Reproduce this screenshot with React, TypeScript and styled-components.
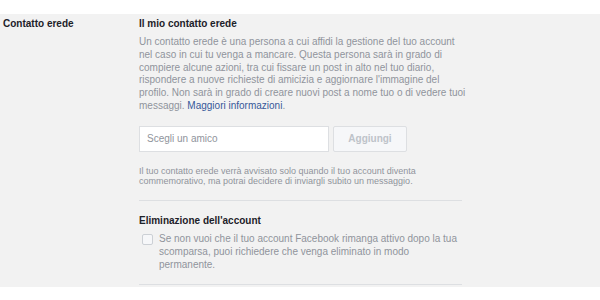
import React from 'react';
import styled, { createGlobalStyle } from 'styled-components';

const GlobalStyle = createGlobalStyle`
    body {
        margin: 0;
        background: #ffffff;
        font-family: "Liberation Sans", Arial, sans-serif;
    }
`;

export default function App() {
    return (
        <Root>
            <GlobalStyle/>
            <Panel>
                <Label>Contatto erede</Label>
                <Content>
                    <Heading>Il mio contatto erede</Heading>
                    <Paragraph>
                        Un contatto erede è una persona a cui affidi la gestione del tuo account
                        nel caso in cui tu venga a mancare. Questa persona sarà in grado di
                        compiere alcune azioni, tra cui fissare un post in alto nel tuo diario,
                        rispondere a nuove richieste di amicizia e aggiornare l'immagine del
                        profilo. Non sarà in grado di creare nuovi post a nome tuo o di vedere tuoi
                        messaggi. <Link href="#">Maggiori informazioni</Link>.
                    </Paragraph>
                    <FormRow>
                        <FriendInput placeholder="Scegli un amico"/>
                        <AddButton disabled>Aggiungi</AddButton>
                    </FormRow>
                    <Note>
                        Il tuo contatto erede verrà avvisato solo quando il tuo account diventa
                        commemorativo, ma potrai decidere di inviargli subito un messaggio.
                    </Note>
                    <Divider/>
                    <Heading $gap={13}>Eliminazione dell'account</Heading>
                    <CheckRow>
                        <Box type="checkbox"/>
                        <CheckText>
                            Se non vuoi che il tuo account Facebook rimanga attivo dopo la tua
                            scomparsa, puoi richiedere che venga eliminato in modo permanente.
                        </CheckText>
                    </CheckRow>
                    <Divider $gap={13}/>
                </Content>
            </Panel>
        </Root>
    );
}

const Root = styled.div`
    width: 600px;
    height: 300px;
    padding-top: 14px;
    box-sizing: border-box;
`;
const Panel = styled.div`
    display: grid;
    grid-template-columns: 139px 323px;
    align-items: start;
    height: 273px;
    padding-top: 3px;
    box-sizing: border-box;
    background: #f2f2f2;
`;
const Label = styled.div`
    padding-left: 3px;
    font-size: 10px;
    line-height: 13px;
    font-weight: bold;
    color: #1d2129;
`;
const Content = styled.div`
    display: flex;
    flex-direction: column;
`;
const Heading = styled.div<{ $gap?: number }>`
    margin-top: ${p => p.$gap ?? 0}px;
    font-size: 10px;
    line-height: 13px;
    font-weight: bold;
    color: #1d2129;
`;
const Paragraph = styled.div`
    width: 329px;
    margin-top: 6px;
    font-size: 10px;
    line-height: 12.8px;
    color: #90949c;
`;
const Link = styled.a`
    color: #365899;
    text-decoration: none;
`;
const FormRow = styled.div`
    display: flex;
    gap: 4px;
    margin-top: 13px;
`;
const FriendInput = styled.input`
    width: 190px;
    height: 26px;
    box-sizing: border-box;
    border: 1px solid #dddfe2;
    background: #ffffff;
    padding: 0 7px;
    font-family: inherit;
    font-size: 10px;
    color: #1d2129;
    outline: none;
    &::placeholder {
        color: #90949c;
    }
`;
const AddButton = styled.button`
    width: 74px;
    height: 26px;
    box-sizing: border-box;
    border: 1px solid #dddfe2;
    border-radius: 2px;
    background: #f6f7f9;
    font-family: inherit;
    font-size: 10px;
    font-weight: bold;
    color: #bec3c9;
    padding: 0;
`;
const Note = styled.div`
    margin-top: 14px;
    font-size: 9px;
    line-height: 10.5px;
    color: #90949c;
`;
const Divider = styled.div<{ $gap?: number }>`
    height: 1px;
    margin-top: ${p => p.$gap ?? 13}px;
    background: #dddfe2;
`;
const CheckRow = styled.div`
    display: flex;
    align-items: flex-start;
    gap: 6px;
    margin-top: 5px;
`;
const Box = styled.input`
    appearance: none;
    flex: none;
    width: 11px;
    height: 11px;
    margin: 2px 0 0 3px;
    box-sizing: border-box;
    border: 1px solid #ccd0d5;
    border-radius: 2px;
    background: #f6f7f9;
`;
const CheckText = styled.div`
    font-size: 10px;
    line-height: 13px;
    color: #90949c;
`;
